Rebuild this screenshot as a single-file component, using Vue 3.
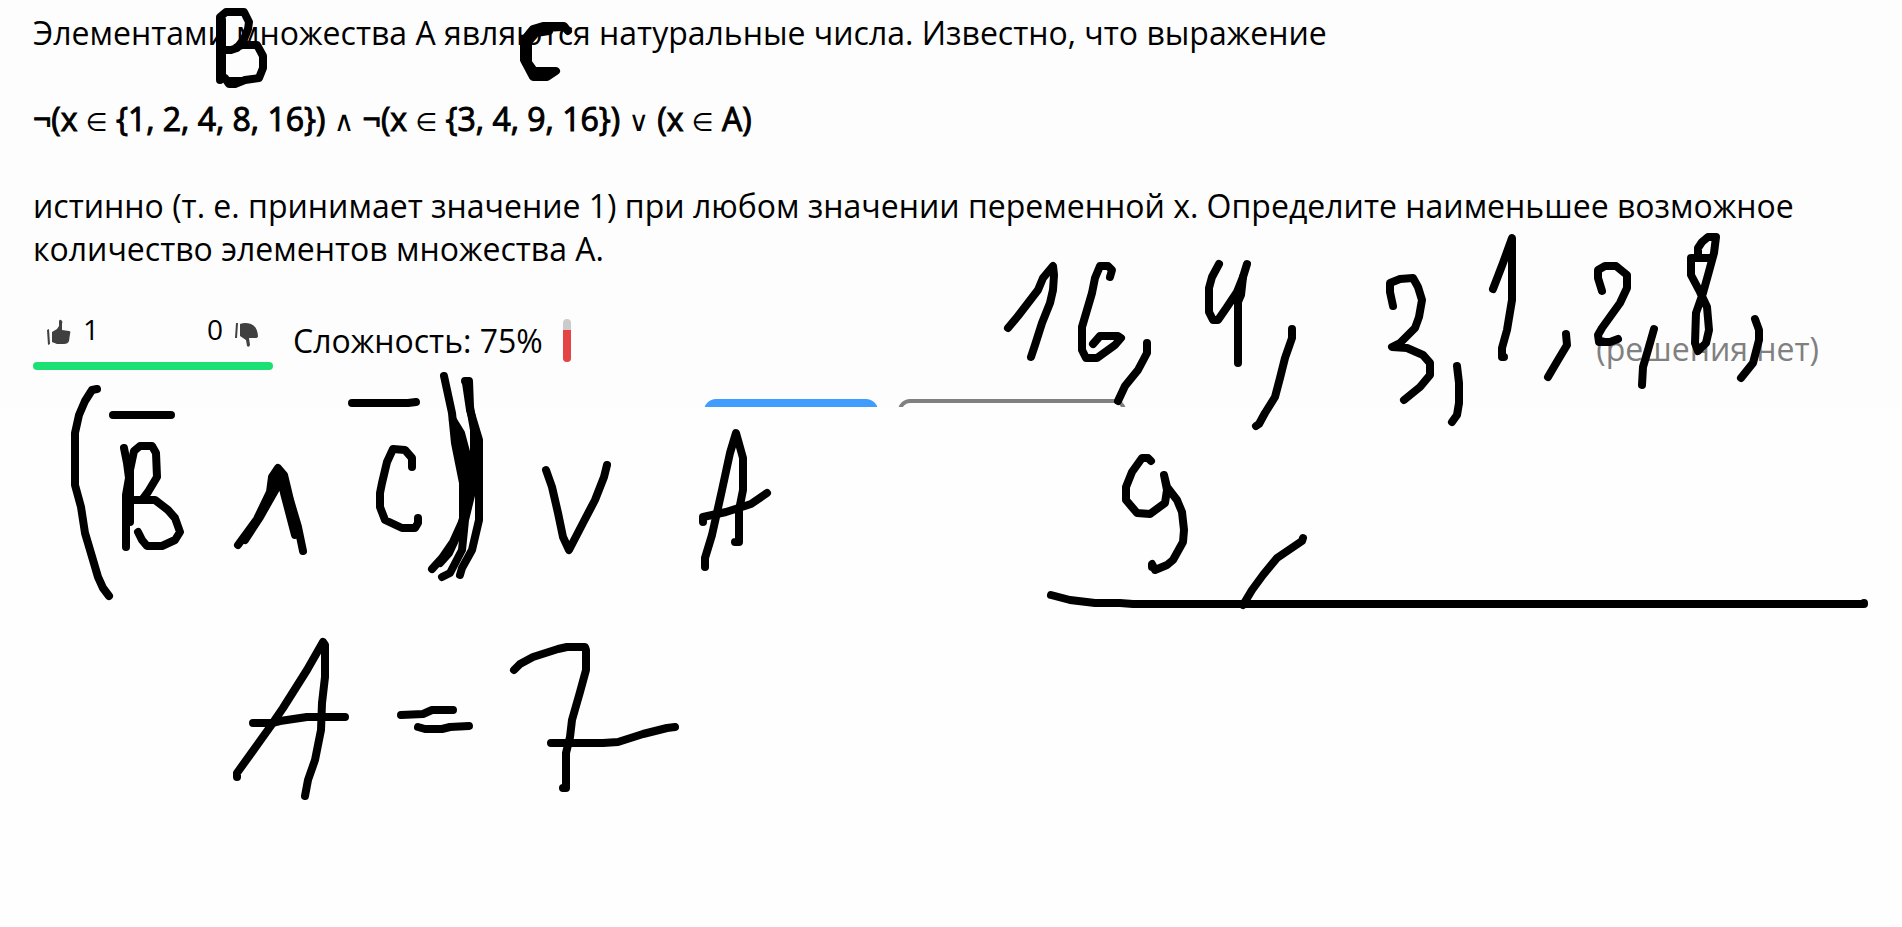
<script setup>
const strokes = [
  // labels over the statement
  'M220 80V17L226 12H244L249 22L248 29L244 39L237 48L231 50H223M237 47L242 45H257L263 56V68L259 78L245 80L235 84H229L225 78L220 79',
  'M568 31L564 26H543L533 29L524 40V60L533 77H547L556 71H531L528 64V42L536 33L549 31',
  'M562 27L545 28L534 33L527 43V61L537 75L553 72M229 81H241M222 20V76',
  // left bracket and B with a bar
  'M97 389L92 390L85 401L79 415L75 433V485L81 507L85 533L93 560L98 577L103 588L109 596',
  'M113 415H171',
  'M124 448L127 463L129 478L126 495V547',
  'M130 522V470L134 451L140 446H152L156 453L157 477L148 492L142 500H135H155L168 510L175 518L180 532L175 540L162 546H147L142 540L138 532',
  // conjunction
  'M238 545L257 519L270 492L272 477L278 468L284 475L290 500L298 527L303 551',
  'M245 540L260 517L277 487L280 475L284 493L295 535',
  // C with a bar
  'M352 403H408L416 402',
  'M412 467V458L405 450L393 449L387 462L382 483L380 493V507L385 520L402 528H415L418 523V518',
  // right brackets
  'M444 376L452 413L455 443L463 483V520L453 542L442 558L432 569',
  'M465 381H469L470 407L474 430V483L465 520L462 550L450 573L442 577',
  'M466 383L470 410L479 440V520L472 550L462 568L460 575',
  'M453 420L461 433L469 463L470 480L466 505L461 527L449 553L440 563',
  'M465 450L467 490M459 440L465 465',
  // disjunction
  'M546 470L552 487L558 513L563 537L569 550L583 523L595 500L604 477L607 465',
  'M705 567V558L712 535L722 490L730 453L736 433L743 458V490L739 510V542H735',
  'M703 522V517L726 512L751 504L767 493',
  // answer line
  'M237 777V773L270 727L283 708L307 670L323 642L325 645V677L322 703L321 730L315 760L308 780L305 796',
  'M253 723H272L280 721L307 717H345',
  'M401 715L423 714L432 710H453',
  'M418 727L425 729H442L450 727L469 726',
  'M514 670L520 664L533 657L558 649L567 647H585L586 650V670L580 692L572 720L570 737L566 753V788H563',
  'M551 743H603L618 742L643 734L667 728L675 727',
  // sixteen
  'M1008 328L1018 316L1038 290L1043 278L1053 266L1054 275L1053 290L1050 303L1042 323L1035 345L1031 357',
  'M1110 277L1112 270L1108 266H1100L1095 278L1092 293L1087 310L1082 327V350L1086 358H1097L1115 345L1121 338L1118 336H1100L1093 344',
  'M1147 343V353L1138 370L1125 386L1118 401',
  // four
  'M1219 264L1212 277L1209 288V312L1213 320H1218L1227 307L1237 292L1243 277L1247 264',
  'M1243 277L1241 295L1238 302V363',
  'M1292 329V338L1285 358L1280 378L1275 397L1265 413L1259 424L1256 426',
  // three
  'M1393 306L1390 292V283L1400 279L1413 278L1418 287L1422 300L1419 317L1415 328L1400 343L1392 347L1407 348L1423 355L1430 363V375L1420 387L1404 400',
  'M1457 366L1459 383V403L1457 415L1452 422',
  // one
  'M1493 289L1503 263L1512 238V300L1507 330L1502 348V357H1504',
  'M1566 334L1567 345L1558 360L1548 377',
  // two
  'M1602 291L1598 278V270L1605 266H1616L1627 275V288L1620 303L1602 328L1598 335L1599 342H1610L1618 339',
  'M1654 329L1648 350L1643 367L1642 385',
  // eight
  'M1698 258V248L1702 242L1708 237H1716L1714 253L1708 275L1703 293L1696 313L1695 343L1698 351L1706 343L1709 330L1707 307L1700 292L1691 275V258H1710',
  'M1755 319L1759 330V340L1753 363L1741 378',
  // nine
  'M1151 461L1148 458H1142L1132 472L1126 487V500L1137 513L1150 514L1165 503L1167 490L1164 475L1167 487L1177 500L1182 512L1184 530L1183 542L1173 560L1167 565L1155 570L1152 564V567',
  'M1303 538L1302 541L1277 558L1263 575L1252 590L1243 605',
  // underline
  'M1051 595L1070 600L1095 603H1120L1133 604H1864L1864 603',
]
</script>

<template>
  <main class="page">
    <section class="task">
      <p>Элементами множества А являются натуральные числа. Известно, что выражение</p>
      <p class="formula">¬(x <i>∈</i> {1, 2, 4, 8, 16}) <i class="operator">∧</i> ¬(x <i>∈</i> {3, 4, 9, 16}) <i class="operator">∨</i> (x <i>∈</i> А)</p>
      <p>истинно (т. е. принимает значение 1) при любом значении переменной х. Определите наименьшее возможное количество элементов множества А.</p>

      <div class="info">
        <div class="votes">
          <div class="counts">
            <button class="vote up" type="button" aria-label="Нравится">
              <svg width="24" height="26" viewBox="0 0 24 26" fill="#404040">
                <path d="M0 11L2 10L3 25L1 26ZM5 13L10 10L12 7V2Q13 0 14 1Q16 2 15 5V11L22 12Q24 12 23 15L22 22Q21 25 17 25H10L5 23Z" />
              </svg>
              <span>1</span>
            </button>
            <button class="vote down" type="button" aria-label="Не нравится">
              <span>0</span>
              <svg width="24" height="26" viewBox="0 0 24 26" fill="#404040">
                <path d="M1 1H3L2 16H0ZM5 2Q10 0 16 2Q22 4 23 14Q23 16 20 16H14L15 23Q14 26 12 24L11 18L5 14Z" />
              </svg>
            </button>
          </div>
          <div class="rating"></div>
        </div>
        <div class="difficulty">
          <span>Сложность: 75%</span>
          <div class="meter"><div class="level"></div></div>
        </div>
        <span class="solution">(решения нет)</span>
      </div>

      <div class="actions">
        <button class="action primary" type="button" aria-label="Ответить"></button>
        <button class="action" type="button" aria-label="Подробнее"></button>
      </div>
    </section>

    <svg class="ink" viewBox="0 0 1902 927" preserveAspectRatio="xMinYMin meet" aria-hidden="true">
      <path v-for="(d, i) in strokes" :key="i" :d="d" />
    </svg>
  </main>
</template>

<style>
body {
  margin: 0;
  background: #fff;
}
</style>

<style scoped>
.page {
  position: relative;
  min-height: 100vh;
  overflow: hidden;
  background: #fefefe;
  color: #000;
  font-family: "Open Sans", "Noto Sans", sans-serif;
  font-size: 32px;
  line-height: 43px;
}

.task {
  padding: 11px 83px 0 33px;
  background: #fdfdfd;
}

p {
  margin: 0 0 43px;
}

.formula {
  margin-bottom: 44px;
  -webkit-text-stroke: 1px #000;
}

.formula i {
  font-family: "DejaVu Sans", sans-serif;
  font-size: 25px;
  font-style: normal;
  line-height: 1;
  -webkit-text-stroke: 0;
}

.formula .operator {
  font-size: 28px;
}

.info {
  display: flex;
  align-items: flex-start;
  gap: 20px;
  margin-top: 49px;
}

.votes {
  width: 240px;
}

.counts {
  display: flex;
  justify-content: space-between;
  height: 43px;
  padding: 0 14px;
}

.vote {
  display: flex;
  align-items: flex-start;
  gap: 12px;
  padding: 0;
  border: 0;
  background: none;
  color: #000;
  font: inherit;
  font-size: 28px;
  line-height: 21px;
}

.down svg {
  margin-top: 3px;
}

.rating {
  height: 8px;
  border-radius: 4px;
  background: #1be174;
}

.difficulty {
  display: flex;
  gap: 20px;
}

.meter {
  display: flex;
  align-items: flex-end;
  width: 8px;
  height: 43px;
  border-radius: 4px;
  overflow: hidden;
  background: #cbcbcb;
}

.level {
  width: 100%;
  height: 75%;
  background: #e54444;
}

.solution {
  align-self: flex-end;
  margin-left: auto;
  color: #808080;
}

.actions {
  display: flex;
  justify-content: center;
  gap: 20px;
  height: 8px;
  margin-top: 29px;
  padding-right: 22px;
  overflow: hidden;
}

.action {
  width: 228px;
  height: 52px;
  padding: 0;
  border: 4px solid #808080;
  border-radius: 12px;
  background: none;
}

.primary {
  width: 174px;
  border-color: #409cff;
  background: #409cff;
}

.ink {
  position: absolute;
  top: 0;
  left: 0;
  width: 100%;
  pointer-events: none;
  fill: none;
  stroke: #000;
  stroke-width: 8px;
  stroke-linecap: round;
  stroke-linejoin: round;
}
</style>
